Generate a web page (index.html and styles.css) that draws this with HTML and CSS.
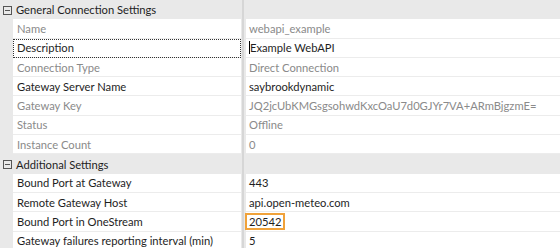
FILE: index.html
```html
<!DOCTYPE html>
<html>
<head>
<meta charset="utf-8">
<link rel="stylesheet" href="styles.css">
</head>
<body>
<div class="grid">
  <div class="row cat">
    <div class="gutter"><span class="toggle"></span></div>
    <div class="label">General Connection Settings</div>
    <div class="split"></div>
    <div class="value"></div>
  </div>
  <div class="row">
    <div class="gutter"></div>
    <div class="label ro">Name</div>
    <div class="split"></div>
    <div class="value ro">webapi_example</div>
  </div>
  <div class="row">
    <div class="gutter"></div>
    <div class="label focus">Description</div>
    <div class="split"></div>
    <div class="value"><span class="caret"></span>Example WebAPI</div>
  </div>
  <div class="row">
    <div class="gutter"></div>
    <div class="label ro">Connection Type</div>
    <div class="split"></div>
    <div class="value ro">Direct Connection</div>
  </div>
  <div class="row">
    <div class="gutter"></div>
    <div class="label">Gateway Server Name</div>
    <div class="split"></div>
    <div class="value">saybrookdynamic</div>
  </div>
  <div class="row">
    <div class="gutter"></div>
    <div class="label ro">Gateway Key</div>
    <div class="split"></div>
    <div class="value ro">JQ2jcUbKMGsgsohwdKxcOaU7d0GJYr7VA+ARmBjgzmE=</div>
  </div>
  <div class="row">
    <div class="gutter"></div>
    <div class="label ro">Status</div>
    <div class="split"></div>
    <div class="value ro">Offline</div>
  </div>
  <div class="row">
    <div class="gutter"></div>
    <div class="label ro">Instance Count</div>
    <div class="split"></div>
    <div class="value ro">0</div>
  </div>
  <div class="row cat">
    <div class="gutter"><span class="toggle"></span></div>
    <div class="label">Additional Settings</div>
    <div class="split"></div>
    <div class="value"></div>
  </div>
  <div class="row">
    <div class="gutter"></div>
    <div class="label">Bound Port at Gateway</div>
    <div class="split"></div>
    <div class="value">443</div>
  </div>
  <div class="row">
    <div class="gutter"></div>
    <div class="label">Remote Gateway Host</div>
    <div class="split"></div>
    <div class="value">api.open-meteo.com</div>
  </div>
  <div class="row">
    <div class="gutter"></div>
    <div class="label">Bound Port in OneStream</div>
    <div class="split"></div>
    <div class="value"><span class="hl">20542</span></div>
  </div>
  <div class="row">
    <div class="gutter"></div>
    <div class="label">Gateway failures reporting interval (min)</div>
    <div class="split"></div>
    <div class="value">5</div>
  </div>
</div>
</body>
</html>
```

FILE: styles.css
```css
html, body {
  margin: 0;
  padding: 0;
  background: #e9e9e9;
}
body {
  font-family: Lato, "Open Sans", sans-serif;
  font-size: 11.2px;
  color: #1e1e1e;
}
.grid {
  display: flex;
  flex-direction: column;
  width: 560px;
}
.row {
  display: flex;
  height: 19.3px;
  align-items: stretch;
}
.gutter {
  width: 13px;
  flex: none;
  background: #e9e9e9;
  position: relative;
}
.label {
  width: 228px;
  flex: none;
  padding-left: 4px;
  background: #fff;
  border-bottom: 1px solid #ececec;
  display: flex;
  align-items: center;
  white-space: nowrap;
  box-sizing: border-box;
}
.split {
  width: 5px;
  flex: none;
  background: linear-gradient(to right, #e9e9e9 0, #e9e9e9 1px, #d6d6d6 1px, #d6d6d6 3px, #e9e9e9 3px);
}
.value {
  flex: 1;
  padding-left: 3px;
  background: #fff;
  border-bottom: 1px solid #ececec;
  display: flex;
  align-items: center;
  white-space: nowrap;
  box-sizing: border-box;
}
.ro {
  color: #8a8a8a;
}
.cat .label, .cat .value {
  background: #e9e9e9;
  border-bottom: none;
}
.cat .label {
  padding-left: 3px;
}
.toggle {
  position: absolute;
  left: 3px;
  top: 6px;
  width: 9px;
  height: 9px;
  border: 1px solid #555;
  box-sizing: border-box;
}
.toggle::after {
  content: "";
  position: absolute;
  left: 1px;
  right: 1px;
  top: 3px;
  height: 1px;
  background: #555;
}
.focus {
  outline: 1px dotted #333;
  outline-offset: -1px;
}
.caret {
  display: inline-block;
  width: 1px;
  height: 13px;
  background: #000;
}
.hl {
  border: 2px solid #f0a23a;
  padding: 0 2px 0 2px;
  margin-left: -4px;
  line-height: 13px;
}
```
